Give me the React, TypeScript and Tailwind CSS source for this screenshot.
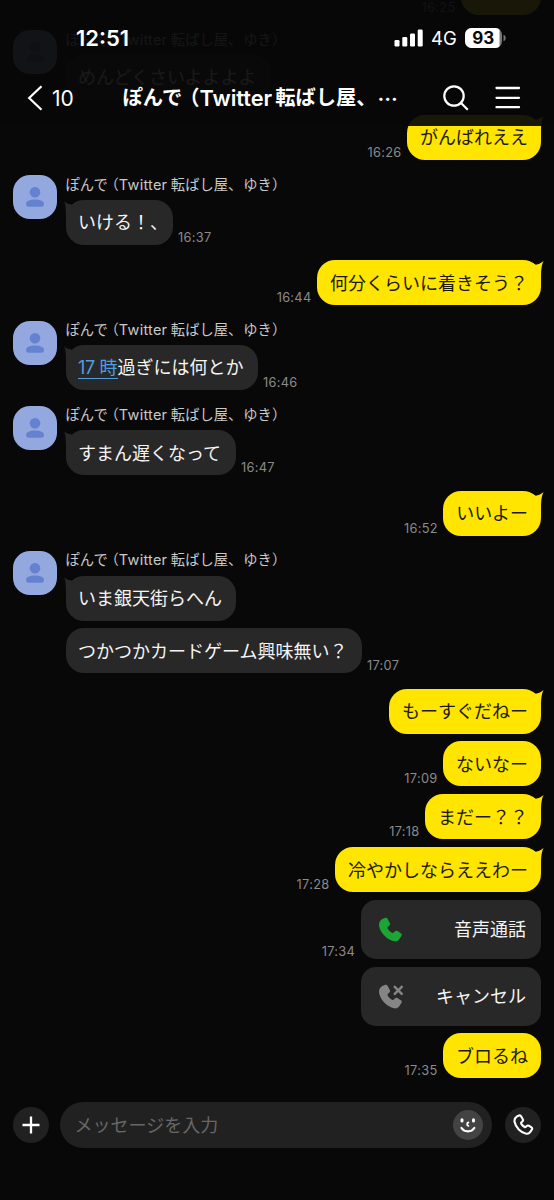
import type { ReactNode } from "react";

const JP = "font-['Inter','Noto_Sans_CJK_JP',sans-serif]";

function Name() {
  return (
    <div className="flex h-[18px] items-center whitespace-nowrap pt-[1px] text-[14.3px] leading-[18px] text-[#c9c9c9]">
      <span>ぽんで</span>
      <span className="ml-[4px] [font-feature-settings:'halt']">（</span>
      <span className="text-[14.5px] tracking-[0.25px]">Twitter</span>
      <span className="ml-[3.5px]">転ばし屋、</span>
      <span className="ml-[1px]">ゆき</span>
      <span className="[font-feature-settings:'halt']">）</span>
    </div>
  );
}

function Avatar() {
  return (
    <div className="flex h-[44px] w-[44px] shrink-0 items-center justify-center rounded-[17px] bg-[#93a8de]">
      <svg width="20" height="22" viewBox="0 0 20 22" fill="#6582d0">
        <circle cx="10" cy="6.3" r="5.3" />
        <path d="M1 18c0-3 3.8-4.6 9-4.6s9 1.600 9 4.600c0 1.700-1 2.700-2.700 2.700H3.700C2 20.700 1 19.700 1 18Z" />
      </svg>
    </div>
  );
}

function Time({ children }: { children: ReactNode }) {
  return (
    <span className="mb-[-1px] text-[12.8px] leading-[16px] tracking-[0.3px] text-[#8b8b8b]">{children}</span>
  );
}

function Out({ children, time, tail }: { children: ReactNode; time?: string; tail?: boolean }) {
  return (
    <div className="flex items-end justify-end gap-[5.5px] pr-[13px]">
      {time && <Time>{time}</Time>}
      <div className="relative flex h-[45px] items-center whitespace-nowrap rounded-[18px] bg-[#ffe500] px-[13px] pt-[2px] text-[18px] leading-none text-[#1c1a08]">
        {tail && (
          <svg className="absolute -right-[3px] top-0" width="13" height="20" viewBox="0 0 13 20">
            <path d="M1 2.400L4.700 4.800C7.500 4.300 10.500 3 12.600 1C11 4 10 8 10 18L3 16Z" fill="#ffe500" />
          </svg>
        )}
        <span className="relative">{children}</span>
      </div>
    </div>
  );
}

function Bubble({ children, time, tail, width }: { children: ReactNode; time?: string; tail?: boolean; width: string }) {
  return (
    <div className="flex items-end gap-[5.5px]">
      <div className={`relative flex h-[45px] ${width} items-center whitespace-nowrap rounded-[18px] bg-[#282828] pl-[12.5px] pt-[2px] text-[18px] leading-none text-[#f4f4f4]`}>
        {tail && (
          <svg className="absolute -left-[2px] top-0" width="13" height="20" viewBox="0 0 13 20">
            <path d="M0 1C2.200 3.400 4.500 4.200 7 4.300L10 8L10 16L2 18C2 9 1.600 4.500 0 1Z" fill="#282828" />
          </svg>
        )}
        <span className="relative">{children}</span>
      </div>
      {time && <Time>{time}</Time>}
    </div>
  );
}

function Incoming({ children }: { children: ReactNode }) {
  return (
    <div className="flex items-start gap-[8.5px] pl-[13px]">
      <Avatar />
      <div>
        <Name />
        <div className="mt-[6.7px] flex flex-col gap-[7.8px]">{children}</div>
      </div>
    </div>
  );
}

const HANDSET =
  "M6 .2C7.300-.2 8.300.3 8.900 1.400L11 5.200C11.600 6.400 11.200 7.200 10.300 8L9 9.200C8.500 9.800 8.600 10.300 9 11C10 12.600 11.500 14 13.200 15C13.900 15.400 14.400 15.300 14.900 14.800L16 13.700C16.800 12.900 17.600 12.800 18.700 13.400L22 15.600C23.100 16.300 23.300 17.200 22.600 18.300L20.800 21C19.500 23 17.600 24 15.300 23.600C8.500 22.300 1.500 15.300 .3 8.300C-.2 5.200 1.200 2.900 3.500 1.400Z";

function Call({ label, time, cancelled }: { label: string; time?: string; cancelled?: boolean }) {
  return (
    <div className="flex items-end justify-end gap-[6px] pr-[13px]">
      {time && <Time>{time}</Time>}
      <div className="flex h-[59px] w-[180px] items-center justify-between rounded-[15px] bg-[#282828] pl-[17px] pr-[15px] text-[18px] leading-none text-[#f4f4f4]">
        <svg width="26" height="26" viewBox="0 0 26 26">
          <path d={HANDSET} transform="translate(0.8 1.7)" fill={cancelled ? "#858585" : "#1ba534"} />
          {cancelled && (
            <path d="M16 3.200l8.500 8.500M24.500 3.200l-8.500 8.500" stroke="#858585" strokeWidth="2.400" />
          )}
        </svg>
        <span className="pt-[2px]">{label}</span>
      </div>
    </div>
  );
}

function Header() {
  return (
    <header className="absolute inset-x-0 top-0 h-[126px] bg-[#080808]/93 text-white">
      <div className="flex h-[76px] items-center pl-[76px] pr-[48px]">
        <span className="text-[22px] font-semibold leading-none">12:51</span>
        <div className="ml-auto flex items-center">
          <svg width="29" height="18" viewBox="0 0 29 18" fill="white">
            <rect x="0.500" y="11" width="5" height="6.500" rx="1.300" />
            <rect x="8.300" y="8" width="5" height="9.500" rx="1.300" />
            <rect x="16" y="4.500" width="5" height="13" rx="1.300" />
            <rect x="23.700" y="0.500" width="5" height="17" rx="1.300" />
          </svg>
          <span className="ml-[8.5px] w-[27px] text-[18.5px] leading-none">4G</span>
          <svg className="ml-[7px]" width="41" height="20" viewBox="0 0 41 20">
            <defs>
              <clipPath id="battery"><rect width="37" height="20" rx="6.500" /></clipPath>
            </defs>
            <g clipPath="url(#battery)">
              <rect width="37" height="20" fill="#777" />
              <rect width="34.500" height="20" fill="white" />
            </g>
            <path d="M38.500 6.800c1.500.5 2.200 1.700 2.200 3.200s-.7 2.700-2.200 3.200Z" fill="#777" />
            <text x="18.200" y="16" textAnchor="middle" fontSize="17" fontWeight="700" fill="#080808" fontFamily="Inter">93</text>
          </svg>
        </div>
      </div>
      <div className="flex h-[44px] items-center pl-[27px] pr-[33px]">
        <svg width="17" height="26" viewBox="0 0 17 26" fill="none" stroke="white" strokeWidth="2.200">
          <path d="M14.500 1.200L2.200 13l12.300 11.800" />
        </svg>
        <span className="ml-[8px] w-[26px] text-[21px] leading-none">10</span>
        <div className="ml-[44.5px] flex items-center whitespace-nowrap pt-[1px] text-[20.3px] font-bold leading-none">
          <span>ぽんで</span>
          <span className="ml-[7px] [font-feature-settings:'halt']">（</span>
          <span className="text-[21.7px] font-semibold">Twitter</span>
          <span className="ml-[3px]">転ばし屋、</span>
          <span className="ml-[1px] font-['Noto_Sans_CJK_JP']">…</span>
        </div>
        <svg className="ml-auto" width="26" height="26" viewBox="0 0 26 26" fill="none" stroke="white" strokeWidth="2.200">
          <circle cx="11" cy="11" r="9.700" />
          <path d="M18 18l6.800 6.800" />
        </svg>
        <svg className="ml-[26px]" width="26" height="24" viewBox="0 0 26 24" stroke="white" strokeWidth="2.300" strokeLinecap="round">
          <path d="M1.500 2h22.500M1.500 11.800h22.500M1.500 21.200h22.500" />
        </svg>
      </div>
    </header>
  );
}

function Composer() {
  return (
    <footer className="mt-[23.5px] flex h-[46px] items-center px-[13px]">
      <button className="flex h-9 w-9 items-center justify-center rounded-full bg-[#212121]">
        <svg width="18" height="18" viewBox="0 0 18 18" stroke="white" strokeWidth="2.300">
          <path d="M.5 9h17M9 .5v17" />
        </svg>
      </button>
      <div className="ml-[10.5px] flex h-[46px] w-[432px] items-center justify-between rounded-full bg-[#212121] pl-[15px] pr-[9px]">
        <span className="pt-[2px] text-[18px] leading-none text-[#676767]">メッセージを入力</span>
        <svg width="30" height="30" viewBox="0 0 30 30">
          <circle cx="15" cy="15" r="15" fill="#434343" />
          <g stroke="white" fill="none" strokeLinecap="round">
            <path d="M9 9.800v1.300M20.500 9.800v1.300" strokeWidth="3" />
            <path d="M15.400 12.500c-1.700.2-1.700 3.300 0 3.400" strokeWidth="1.800" />
            <path d="M8.500 18c3 4.500 9.800 4.500 12.800 0" strokeWidth="2.200" />
          </g>
        </svg>
      </div>
      <button className="ml-[13.5px] flex h-9 w-9 items-center justify-center rounded-full bg-[#212121]">
        <svg width="21" height="21" viewBox="0 0 27 27" fill="none" stroke="white" strokeWidth="2.700">
          <path d={HANDSET} transform="translate(1.7 1.7)" />
        </svg>
      </button>
    </footer>
  );
}

export default function App() {
  return (
    <div className={`relative h-[1200px] w-[554px] overflow-hidden bg-[#080808] ${JP}`} lang="ja">
      <main className="-mt-[30.3px] flex flex-col gap-[15.3px]">
        <Out time="16:25">ないす</Out>
        <Incoming>
          <Bubble tail width="w-[205px]">めんどくさいよよよよ</Bubble>
        </Incoming>
        <Out time="16:26" tail>がんばれええ</Out>
        <Incoming>
          <Bubble tail time="16:37" width="w-[107px]">いける！、</Bubble>
        </Incoming>
        <Out time="16:44" tail>何分くらいに着きそう？</Out>
        <Incoming>
          <Bubble tail time="16:46" width="w-[192px]">
            <span className="inline-flex border-b-[1.5px] border-[#4e9fe0] pb-[1px] text-[#4e9fe0]">
              <span className="w-[21.5px] tracking-[-0.2px]">17</span>時
            </span>
            過ぎには何とか
          </Bubble>
        </Incoming>
        <Incoming>
          <Bubble tail time="16:47" width="w-[170px]">すまん遅くなって</Bubble>
        </Incoming>
        <Out time="16:52" tail>いいよー</Out>
        <Incoming>
          <Bubble tail width="w-[170px]">いま銀天街らへん</Bubble>
          <Bubble time="17:07" width="w-[296px]">つかつかカードゲーム興味無い？</Bubble>
        </Incoming>
        <div className="flex flex-col gap-[7.8px]">
          <Out tail>もーすぐだねー</Out>
          <Out time="17:09">ないなー</Out>
          <Out time="17:18" tail>まだー？？</Out>
          <Out time="17:28" tail>冷やかしならええわー</Out>
          <Call time="17:34" label="音声通話" />
          <Call label="キャンセル" cancelled />
          <Out time="17:35">ブロるね</Out>
        </div>
      </main>
      <Composer />
      <Header />
    </div>
  );
}
